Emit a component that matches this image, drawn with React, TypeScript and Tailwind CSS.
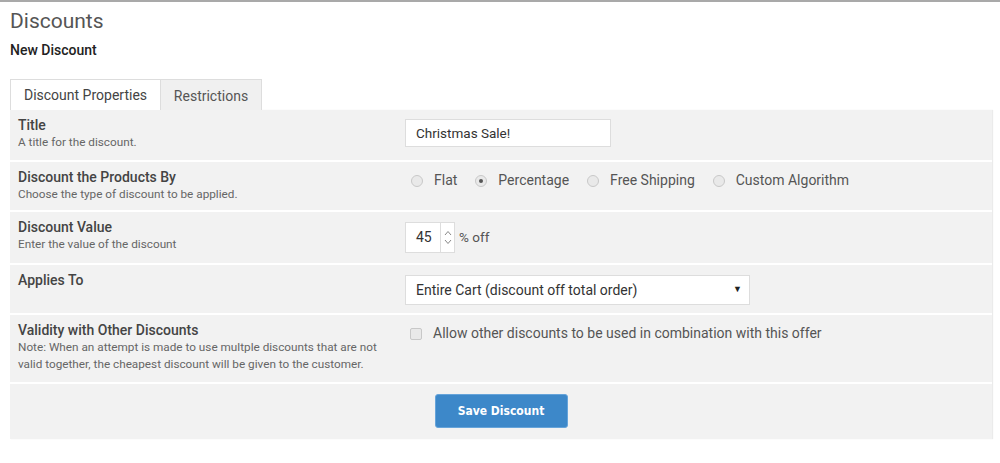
import React from "react";

const font = { fontFamily: "Roboto, 'Liberation Sans', sans-serif" };

function Radio({ checked, label }: { checked?: boolean; label: string }) {
  return (
    <label className="flex items-center mr-[18px]">
      <span className="w-[12px] h-[12px] rounded-full border border-[#c8c8c8] bg-[#e9e9e9] flex items-center justify-center mr-[11px]">
        {checked && <span className="w-[4px] h-[4px] rounded-full bg-[#555]" />}
      </span>
      <span className="text-[14px] text-[#555]">{label}</span>
    </label>
  );
}

function Row({
  label,
  desc,
  children,
  className,
}: {
  label?: string;
  desc?: React.ReactNode;
  children: React.ReactNode;
  className: string;
}) {
  return (
    <div className={"flex bg-[#f2f2f2] border-b-2 border-white " + className}>
      <div className="w-[387px] pl-[8px] pt-[7px]">
        {label && <div className="text-[14px] leading-[16px] font-medium text-[#444]">{label}</div>}
        {desc && <div className="text-[11.75px] leading-[17px] text-[#666] mt-[1px]">{desc}</div>}
      </div>
      <div className="flex-1 pl-[8px]">{children}</div>
    </div>
  );
}

export default function App() {
  return (
    <div style={font} className="w-[1000px] h-[463px] bg-white border-t-2 border-[#a9a9a9]">
      <div className="pl-[10px] pr-[8px]">
        <h1 className="text-[21px] leading-[24px] text-[#555] pt-[7px]">Discounts</h1>
        <h2 className="text-[14px] font-medium text-[#222] mt-[9px] leading-[16px]">New Discount</h2>

        <div className="flex mt-[21px] h-[31px]">
          <div className="w-[151px] border border-b-0 border-[#ddd] bg-white flex items-center justify-center text-[14px] text-[#444]">
            Discount Properties
          </div>
          <div className="w-[101px] border border-l-0 border-b-0 border-[#ddd] bg-[#f0f0f0] flex items-center justify-center pt-[3px] text-[14px] text-[#555]">
            Restrictions
          </div>
        </div>

        <div className="w-[982px] shadow-[1px_0_1px_rgba(0,0,0,0.08)]">
          <Row label="Title" desc="A title for the discount." className="h-[52px]">
            <div className="pt-[9px]">
              <div className="w-[206px] h-[28px] bg-white border border-[#ddd] flex items-center pl-[10px] text-[13.5px] text-[#333]">
                Christmas Sale!
              </div>
            </div>
          </Row>

          <Row label="Discount the Products By" desc="Choose the type of discount to be applied." className="h-[50px]">
            <div className="flex items-center pt-[8px] pl-[6px]">
              <Radio label="Flat" />
              <Radio checked label="Percentage" />
              <Radio label="Free Shipping" />
              <Radio label="Custom Algorithm" />
            </div>
          </Row>

          <Row label="Discount Value" desc="Enter the value of the discount" className="h-[53px]">
            <div className="flex items-center pt-[10px]">
              <div className="w-[50px] h-[31px] bg-white border border-[#ddd] flex">
                <div className="flex-1 flex items-center pl-[10px] text-[14px] text-[#333]">45</div>
                <div className="w-[14px] border-l border-[#ddd] flex flex-col items-center justify-center text-[#888]">
                  <svg width="8" height="6" viewBox="0 0 8 6" className="mb-[3px]">
                    <path d="M1 5 L4 1.5 L7 5" fill="none" stroke="#888" strokeWidth="1" />
                  </svg>
                  <svg width="8" height="6" viewBox="0 0 8 6">
                    <path d="M1 1 L4 4.5 L7 1" fill="none" stroke="#888" strokeWidth="1" />
                  </svg>
                </div>
              </div>
              <span className="ml-[4px] text-[13.5px] text-[#555]">% off</span>
            </div>
          </Row>

          <Row label="Applies To" className="h-[50px]">
            <div className="pt-[10px]">
              <div className="w-[345px] h-[30px] bg-white border border-[#ddd] flex items-center justify-between pl-[10px] pr-[7px] text-[14px] text-[#333]">
                <span>Entire Cart (discount off total order)</span>
                <span className="text-[9px] text-[#222]">▼</span>
              </div>
            </div>
          </Row>

          <Row
            label="Validity with Other Discounts"
            desc={
              <>
                Note: When an attempt is made to use multple discounts that are not
                <br />
                valid together, the cheapest discount will be given to the customer.
              </>
            }
            className="h-[69px]"
          >
            <div className="flex items-center pt-[8px] pl-[5px]">
              <span className="w-[12px] h-[12px] rounded-[2px] border border-[#c8c8c8] bg-[#e9e9e9] mr-[11px]" />
              <span className="text-[14px] text-[#555]">Allow other discounts to be used in combination with this offer</span>
            </div>
          </Row>

          <div className="h-[55px] bg-[#f2f2f2] flex items-start justify-center pt-[10px]">
            <button
              style={{ fontFamily: "'DejaVu Sans Condensed', 'Liberation Sans Narrow', Roboto, sans-serif" }}
              className="w-[133px] h-[34px] bg-[#3d88c9] border border-[#66a4da] rounded-[3px] text-white text-[12px] font-bold"
            >
              Save Discount
            </button>
          </div>
        </div>
      </div>
    </div>
  );
}
